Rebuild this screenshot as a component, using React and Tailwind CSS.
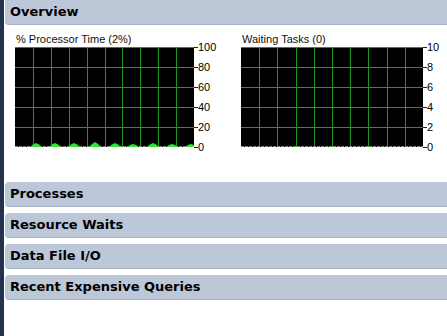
import React from "react";

const sections = ["Processes", "Resource Waits", "Data File I/O", "Recent Expensive Queries"];

/**
 * Grid: black perfmon-style plot with green gridlines
 */
const Grid = ({ w, bumps }) => {
  const cols = Array.from({ length: 9 }, (_, i) => Math.round(((i + 1) * w) / 10));
  const rows = [0, 20, 40, 60, 80];
  return (
    <svg width={w} height={100} className="block bg-black" shapeRendering="crispEdges">
      {cols.map((x) => (
        <rect key={x} x={x} y={0} width={1} height={100} fill="#1f9a1f" />
      ))}
      {rows.map((y) => (
        <rect key={y} x={0} y={y} width={w} height={1} fill="#1f9a1f" />
      ))}
      <line x1={0} x2={w} y1={99.5} y2={99.5} stroke="#8a8a8a" strokeDasharray="3 1" />
      {bumps.map(([c, h]) => (
        <polygon
          key={c}
          shapeRendering="auto"
          points={`${c - 6},100 ${c - 3},${99 - h / 2} ${c},${99 - h} ${c + 3},${99 - h / 2} ${c + 6},100`}
          fill="#2ee62e"
        />
      ))}
    </svg>
  );
};

/**
 * Chart: title, plot and the y-axis scale on the right
 */
const Chart = ({ title, labels, w, bumps, className = "" }) => (
  <div className={`flex flex-col ${className}`}>
    <div className="mt-[8px] ml-px h-[13px] text-[11px] leading-[13px] text-[#111] whitespace-nowrap">{title}</div>
    <div className="mt-px flex items-start">
      <Grid w={w} bumps={bumps} />
      <div className="-mt-[6px] -mb-[6px] h-[112px] flex flex-col justify-between">
        {labels.map((l) => (
          <div key={l} className="h-[12px] flex items-center">
            <div className="w-[4px] h-px bg-[#222]" />
            <span className="text-[11px] leading-[12px] text-black">{l}</span>
          </div>
        ))}
      </div>
    </div>
  </div>
);

const Bar = ({ children, className = "" }) => (
  <div
    className={`h-[25px] flex items-center pl-[5px] bg-[#bcc7d8] border-b border-[#a9b4c6] rounded-l-[4px] text-[13px] font-bold text-black ${className}`}
    style={{ fontFamily: '"DejaVu Sans", Verdana, sans-serif' }}
  >
    {children}
  </div>
);

export default function App() {
  return (
    <div
      className="w-[447px] h-[336px] overflow-hidden bg-white flex"
      style={{ fontFamily: '"Liberation Sans", Arial, sans-serif' }}
    >
      <div className="w-[4px] h-full bg-[#22324f]" />
      <div className="ml-px flex-1 flex flex-col">
        <Bar className="rounded-tl-none">Overview</Bar>
        <div className="flex pl-[10px]">
          <Chart
            className="w-[226px]"
            title="% Processor Time (2%)"
            labels={[100, 80, 60, 40, 20, 0]}
            w={179}
            bumps={[[21, 3], [40, 3], [59, 3], [80, 4], [100, 3], [118, 2], [138, 3], [157, 2], [176, 2]]}
          />
          <Chart title="Waiting Tasks (0)" labels={[10, 8, 6, 4, 2, 0]} w={182} bumps={[]} />
        </div>
        <div className="mt-[35px] flex flex-col gap-[6px]">
          {sections.map((s) => (
            <Bar key={s}>{s}</Bar>
          ))}
        </div>
      </div>
    </div>
  );
}
